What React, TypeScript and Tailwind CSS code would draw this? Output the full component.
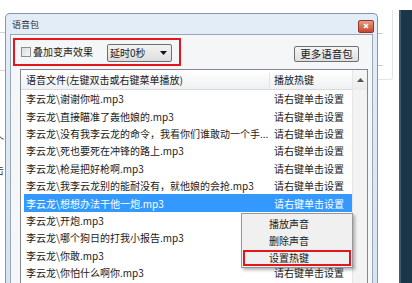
const rows = [
  '李云龙\\谢谢你啦.mp3',
  '李云龙\\直接瞄准了轰他娘的.mp3',
  '李云龙\\没有我李云龙的命令，我看你们谁敢动一个手...',
  '李云龙\\死也要死在冲锋的路上.mp3',
  '李云龙\\枪是把好枪啊.mp3',
  '李云龙\\我李云龙别的能耐没有，就他娘的会抢.mp3',
  '李云龙\\想想办法干他一炮.mp3',
  '李云龙\\开炮.mp3',
  '李云龙\\哪个狗日的打我小报告.mp3',
  '李云龙\\你敢.mp3',
  '李云龙\\你怕什么啊你.mp3',
];

// rows whose hotkey cell sits under the context menu
const covered = [7, 8, 9];

const font = { fontFamily: '"Noto Sans CJK SC", "Liberation Sans", sans-serif' };

export default function App() {
  return (
    <div
      className="flex h-[283px] w-[412px] overflow-hidden bg-white text-[10px] text-[#1a1a1a]"
      style={font}
    >
      {/* desktop behind, left */}
      <div className="flex w-[5px] shrink-0 flex-col">
        <div className="mt-[32px] h-px bg-[#cfd3d8]" />
        <div className="mt-[37px] h-px bg-[#cfd3d8]" />
        <div className="mt-[64px] -ml-[6px] leading-none text-[#333]">个</div>
        <div className="mt-[20px] -ml-[6px] leading-none text-[#333]">击</div>
      </div>

      {/* window */}
      <div className="mt-[13px] flex w-[373px] shrink-0 flex-col rounded-t-[5px] border border-b-0 border-[#8796a8] bg-gradient-to-b from-[#e3edf8] to-[#d6e3f1]">
        {/* title bar */}
        <div className="flex h-[20px] items-center justify-between pl-[6px] pr-[3px]">
          <span className="text-[9px] leading-none text-[#1e2a38]">语音包</span>
          <div className="mt-[4px] flex h-[13px] w-[16px] items-center justify-center rounded-[2px] border border-[#8a3a2a] bg-gradient-to-b from-[#e89a80] to-[#c8452c]">
            <svg width="6" height="6" viewBox="0 0 6 6">
              <path d="M1 1 L5 5 M5 1 L1 5" stroke="#fff" strokeWidth="1.6" />
            </svg>
          </div>
        </div>

        {/* frame body */}
        <div className="flex flex-1 px-[4px]">
          <div className="flex flex-1 flex-col border border-b-0 border-[#9aa8b8] bg-[#f5f6f7]">
            {/* top controls */}
            <div className="flex items-start justify-between">
              <div className="ml-[2px] mt-[3px] flex h-[28px] w-[168px] items-center border-2 border-[#e2161d] pl-[6px]">
                <div className="h-[10px] w-[10px] border border-[#8e8f8f] bg-gradient-to-br from-[#dcdcdc] to-[#f6f6f6]" />
                <span className="ml-[2px] leading-none">叠加变声效果</span>
                <div className="ml-[14px] mt-[1px] flex h-[18px] w-[65px] items-center justify-between rounded-[2px] border border-[#707070] bg-gradient-to-b from-[#f4f4f4] to-[#dddddd] pl-[2px] pr-[4px]">
                  <span className="leading-none">延时0秒</span>
                  <svg width="7" height="4" viewBox="0 0 7 4">
                    <path d="M0 0 H7 L3.5 4 Z" fill="#111" />
                  </svg>
                </div>
              </div>
              <div className="mr-[13px] mt-[11px] flex h-[16px] w-[65px] items-center justify-center rounded-[2px] border border-[#707070] bg-gradient-to-b from-[#f6f6f6] to-[#dedede] text-[10.5px] leading-none">
                更多语音包
              </div>
            </div>

            {/* list */}
            <div className="ml-[9px] mr-[4px] mt-[3px] flex flex-1 border border-b-0 border-[#828790] bg-white">
              <div className="relative flex flex-1 flex-col">
                <div className="flex h-[20px] shrink-0 items-center border-b border-[#d8dadd] bg-gradient-to-b from-white to-[#f0f1f3]">
                  <span className="w-[249px] border-r border-[#e2e3e5] pl-[5px] leading-[14px]">语音文件(左键双击或右键菜单播放)</span>
                  <span className="pl-[4px] leading-[14px]">播放热键</span>
                </div>
                {rows.map((r, i) => (
                  <div
                    key={i}
                    className={
                      i === 6
                        ? 'ml-[3px] flex h-[17.4px] shrink-0 items-center bg-[#3399ff] text-white'
                        : 'ml-[3px] flex h-[17.4px] shrink-0 items-center'
                    }
                  >
                    <span className="w-[247px] shrink-0 whitespace-nowrap pl-[2px] leading-[15px]">{r}</span>
                    {!covered.includes(i) && (
                      <span className="pl-[3px] leading-[15px]">请右键单击设置</span>
                    )}
                  </div>
                ))}

                {/* context menu */}
                <div className="absolute left-[220px] top-[143px] flex h-[55px] w-[112px] flex-col border border-[#979797] bg-[#f0f0f0] py-[1px] shadow-[2px_2px_3px_rgba(0,0,0,0.3)]">
                  <div className="flex h-[18px] items-center pl-[27px] leading-none">播放声音</div>
                  <div className="flex h-[18px] items-center pl-[27px] leading-none">删除声音</div>
                  <div className="ml-[1px] mr-[1px] flex h-[17px] items-center border-2 border-[#e2161d] pl-[24px] leading-none">设置热键</div>
                </div>
              </div>

              {/* scrollbar */}
              <div className="flex w-[15px] flex-col border-l border-[#e6e6e6] bg-[#f3f3f3]">
                <div className="flex h-[20px] items-center justify-center bg-gradient-to-b from-[#f7f7f7] to-[#ececec]">
                  <svg width="7" height="4" viewBox="0 0 7 4">
                    <path d="M0 4 H7 L3.5 0 Z" fill="#555" />
                  </svg>
                </div>
              </div>
            </div>
          </div>
        </div>
      </div>

      {/* desktop behind, right */}
      <div className="flex w-[21px] shrink-0 flex-col">
        <div className="mt-[10px] h-[70px] w-[15px] rounded-br-[3px] border-b border-r border-[#e1e4e8] bg-white">
          <div className="mt-[23px] h-px w-[5px] bg-[#c9ced4]" />
          <div className="mt-[31px] h-px w-[5px] bg-[#c9ced4]" />
        </div>
      </div>
      <div className="mt-[10px] w-[13px] shrink-0 border-l-2 border-[#3d5a6e] bg-[#1b3549]" />
    </div>
  );
}
